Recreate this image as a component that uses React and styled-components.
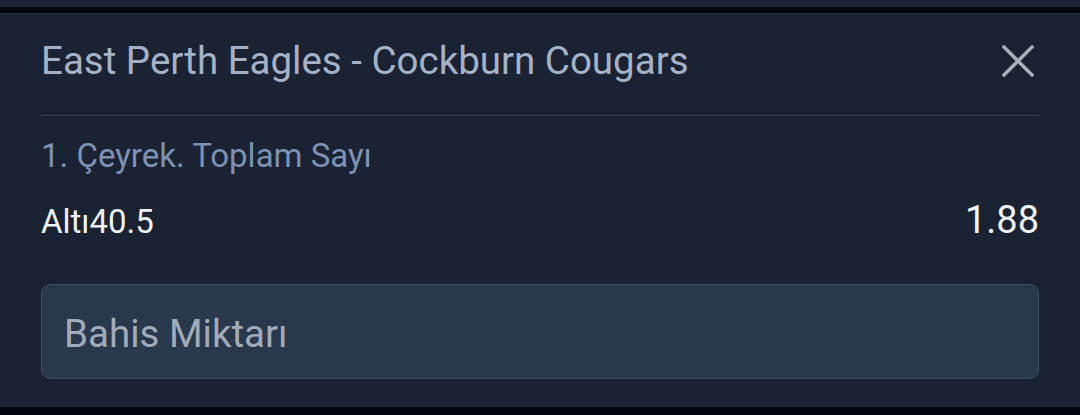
import React from 'react';
import styled, {createGlobalStyle} from 'styled-components';

const GlobalStyle = createGlobalStyle`
  html, body {
    margin: 0;
    padding: 0;
    background: #05080f;
    font-family: Roboto, "Noto Sans", sans-serif;
  }
`;

const Page = styled.div`
  width: 1080px;
  height: 415px;
  display: flex;
  flex-direction: column;
  background: #05080f;
  overflow: hidden;
`;

const TopStrip = styled.div`
  height: 7px;
  background: #1b2231;
`;

const Panel = styled.div`
  margin-top: 6px;
  height: 394px;
  box-sizing: border-box;
  border-top: 1px solid #2b3343;
  background: #1b2231;
  padding: 0 41px;
  display: flex;
  flex-direction: column;
`;

const Header = styled.div`
  height: 99px;
  display: flex;
  align-items: center;
  justify-content: space-between;
  box-sizing: border-box;
  padding-bottom: 6px;
`;

const Title = styled.h2`
  margin: 0;
  font-size: 38.5px;
  font-weight: 400;
  color: #a5b2c5;
`;

const CloseButton = styled.button`
  width: 40px;
  height: 40px;
  margin-right: 1px;
  padding: 0;
  border: none;
  background: none;
  display: flex;
  align-items: center;
  justify-content: center;
  cursor: pointer;
`;

const Divider = styled.div`
  height: 1px;
  background: #0e1420;
  border-bottom: 2px solid #283142;
`;

const Market = styled.div`
  margin-top: 21px;
  font-size: 33px;
  color: #7d91b3;
  line-height: 38px;
`;

const Selection = styled.div`
  margin-top: 24px;
  display: flex;
  justify-content: space-between;
  align-items: baseline;
  color: #eef1f6;
  line-height: 42px;
`;

const Pick = styled.span`
  font-size: 33px;
`;

const Odds = styled.span`
  font-size: 38px;
`;

const StakeInput = styled.input`
  margin-top: 41px;
  height: 95px;
  box-sizing: border-box;
  width: 100%;
  border: 1px solid #3b4a61;
  border-radius: 9px;
  background: #29384b;
  padding: 4px 22px 0;
  font-family: inherit;
  font-size: 38.5px;
  color: #eef1f6;
  outline: none;

  &::placeholder {
    color: #a2abb7;
  }
`;

const CloseIcon = () => (
  <svg width="32" height="32" viewBox="0 0 32 32">
    <path d="M2 2 L30 30 M30 2 L2 30" stroke="#a9afb8" strokeWidth="3.4" strokeLinecap="square" fill="none"/>
  </svg>
);

const App = () => {
  return (
    <Page>
      <GlobalStyle/>
      <TopStrip/>
      <Panel>
        <Header>
          <Title>East Perth Eagles - Cockburn Cougars</Title>
          <CloseButton aria-label="Kapat">
            <CloseIcon/>
          </CloseButton>
        </Header>
        <Divider/>
        <Market>1. Çeyrek. Toplam Sayı</Market>
        <Selection>
          <Pick>Altı40.5</Pick>
          <Odds>1.88</Odds>
        </Selection>
        <StakeInput placeholder="Bahis Miktarı"/>
      </Panel>
    </Page>
  );
};

export default App;
